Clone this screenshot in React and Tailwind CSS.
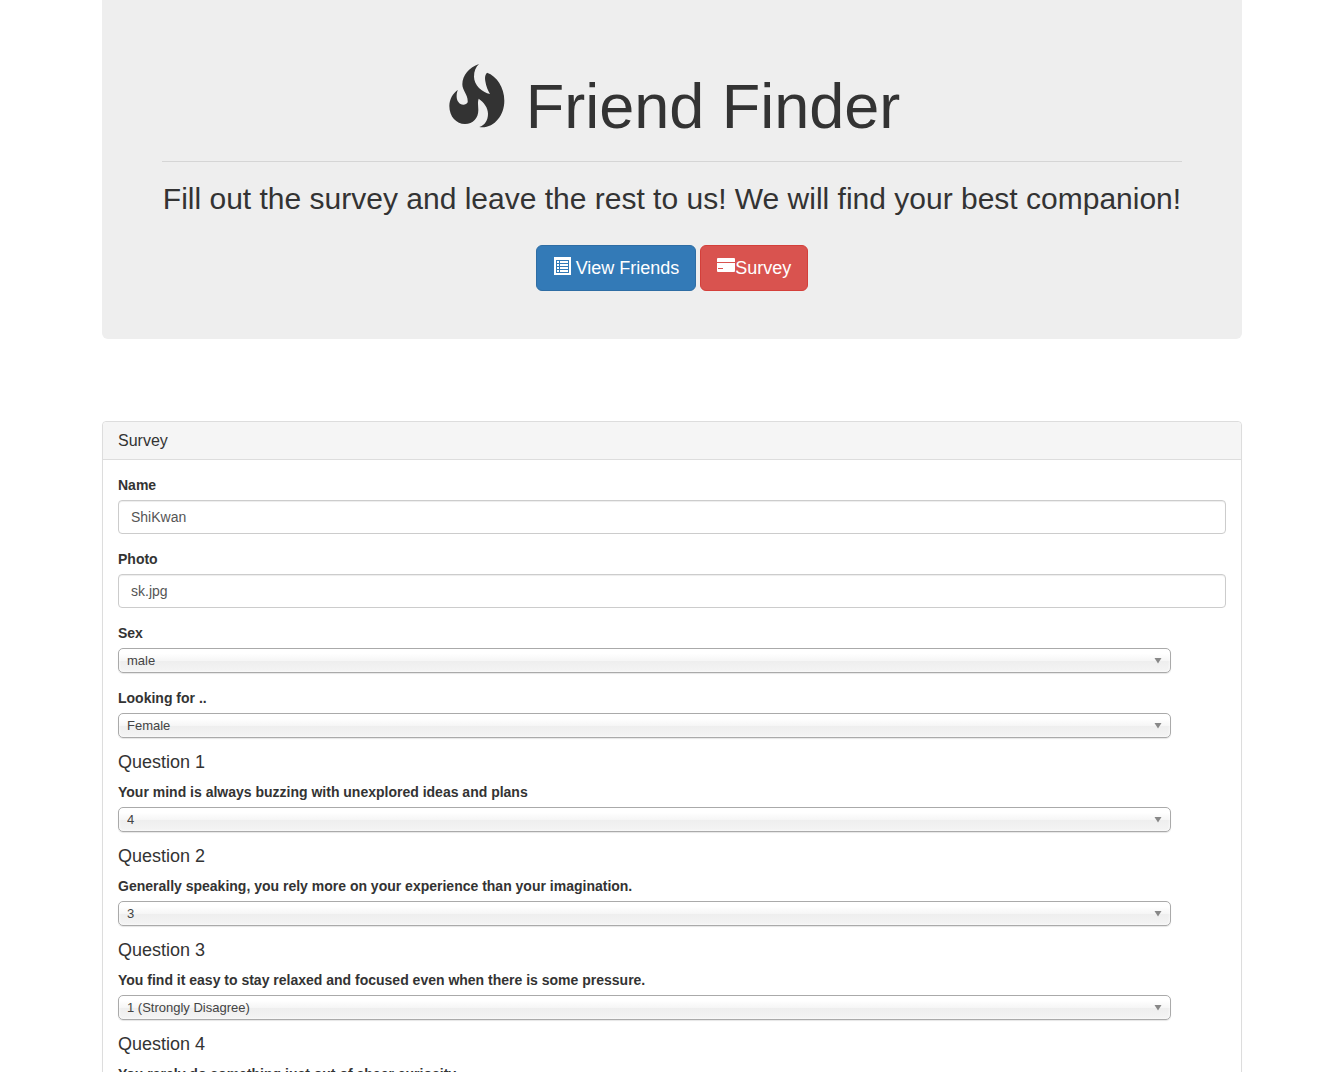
import { useId } from "react";

function FireIcon() {
  return (
    <svg aria-hidden="true" viewBox="27 27 168 192" className="ml-[5px] h-16 w-14 fill-current">
      <path d="M117 27 C88 37 67 60 67 88 C67 108 85 120 83 142 C81 147 76 149 70 149 C57 148 49 136 50 121 C50 114 52 108 54 104 C38 115 28 133 28 153 C28 185 49 207 75 207 C99 207 115 190 115 165 C115 153 112 143 116 131 C132 142 144 158 144 176 C144 195 135 210 118 216 C160 222 193 183 193 137 C193 97 170 63 141 53 C135 60 134 68 136 79 C138 94 144 107 150 117 C126 112 102 90 102 65 C102 49 107 36 117 27 Z" />
    </svg>
  );
}

function ListIcon() {
  return (
    <svg aria-hidden="true" viewBox="0 0 18 18" className="inline-block size-[18px] fill-current" shapeRendering="crispEdges">
      <path fillRule="evenodd" d="M0 0H17V18H0Z M2 3V16H15V3Z" />
      <path d="M3 4h2v2H3z M6 4h8v2H6z M3 7h2v2H3z M6 7h8v2H6z M3 10h2v2H3z M6 10h8v2H6z M3 13h2v2H3z M6 13h8v2H6z" />
    </svg>
  );
}

function CardIcon() {
  return (
    <svg aria-hidden="true" viewBox="0 0 18 18" className="inline-block size-[18px] fill-current">
      <path d="M1 1H17Q18 1 18 2V5H0V2Q0 1 1 1Z" />
      <path fillRule="evenodd" d="M0 6H18V14Q18 15 17 15H1Q0 15 0 14Z M1 11V12H6V11Z" />
    </svg>
  );
}

function TextField({ label, value }) {
  const id = useId();
  return (
    <div className="mb-[15px]">
      <label htmlFor={id} className="mb-[5px] block font-bold">{label}</label>
      <input
        id={id}
        type="text"
        defaultValue={value}
        className="block h-[34px] w-full rounded border border-[#ccc] bg-white px-3 text-[#555] shadow-[inset_0_1px_1px_rgba(0,0,0,0.075)]"
      />
    </div>
  );
}

function SelectField({ label, value, options }) {
  const id = useId();
  return (
    <div>
      <label htmlFor={id} className="mb-[5px] block font-bold">{label}</label>
      <div className="relative w-[95%]">
        <select
          id={id}
          defaultValue={value}
          className="block h-[25px] w-full appearance-none rounded-[5px] border border-[#aaa] bg-[linear-gradient(#fff_20%,#f6f6f6_50%,#eee_52%,#f4f4f4_100%)] px-2 text-[13px] leading-[23px] text-[#444] shadow-[inset_0_0_3px_white,0_1px_1px_rgba(0,0,0,0.1)]"
        >
          {options.map((o) => (
            <option key={o}>{o}</option>
          ))}
        </select>
        <svg aria-hidden="true" viewBox="0 0 8 6" className="pointer-events-none absolute top-[10px] right-[9px] h-1.5 w-2 fill-[#888]">
          <path d="M0.5 0H7.5L4 5.5Z" />
        </svg>
      </div>
    </div>
  );
}

const scale = ["1 (Strongly Disagree)", "2", "3", "4", "5 (Strongly Agree)"];

const questions = [
  { text: "Your mind is always buzzing with unexplored ideas and plans", value: "4" },
  { text: "Generally speaking, you rely more on your experience than your imagination.", value: "3" },
  { text: "You find it easy to stay relaxed and focused even when there is some pressure.", value: "1 (Strongly Disagree)" },
  { text: "You rarely do something just out of sheer curiosity.", value: "3" },
];

export default function App() {
  return (
    <div className="h-screen overflow-hidden bg-white font-['Liberation_Sans',Arial,sans-serif] text-sm leading-5 text-[#333]">
      <div className="mx-auto max-w-[1140px]">
        <header className="rounded-b-md bg-[#eee] px-[60px] pt-16 pb-12 text-center">
          <h1 className="flex items-start justify-center gap-[21px] text-[63px] leading-[77px]">
            <FireIcon />
            <span className="pt-1">Friend Finder</span>
          </h1>
          <hr className="mt-4 mb-5 border-[#d5d5d5]" />
          <h2 className="text-[30px] leading-[33px] whitespace-nowrap">
            Fill out the survey and leave the rest to us! We will find your best companion!
          </h2>
          <div className="mt-[30px] flex justify-center gap-1 text-lg leading-6 text-white">
            <button type="button" className="flex h-[46px] items-center gap-1 rounded-md border border-[#2e6da4] bg-[#337ab7] px-4">
              <span className="-mt-1 flex pl-px"><ListIcon /></span>
              View Friends
            </button>
            <button type="button" className="flex h-[46px] items-center rounded-md border border-[#d43f3a] bg-[#d9534f] px-4">
              <span className="-mt-1 flex"><CardIcon /></span>
              Survey
            </button>
          </div>
        </header>

        <main className="mt-[82px] rounded border border-[#ddd] shadow-[0_1px_1px_rgba(0,0,0,0.05)]">
          <h3 className="rounded-t border-b border-[#ddd] bg-[#f5f5f5] px-[15px] py-[9px] text-base leading-[19px]">Survey</h3>
          <form className="p-[15px]">
            <TextField label="Name" value="ShiKwan" />
            <TextField label="Photo" value="sk.jpg" />
            <div className="flex flex-col gap-[15px]">
              <SelectField label="Sex" value="male" options={["male", "female"]} />
              <SelectField label="Looking for .." value="Female" options={["Male", "Female"]} />
            </div>
            {questions.map((q, i) => (
              <section key={q.text} className="mt-[14px]">
                <h4 className="mb-[10px] text-lg leading-5">Question {i + 1}</h4>
                <SelectField label={q.text} value={q.value} options={scale} />
              </section>
            ))}
          </form>
        </main>
      </div>
    </div>
  );
}
